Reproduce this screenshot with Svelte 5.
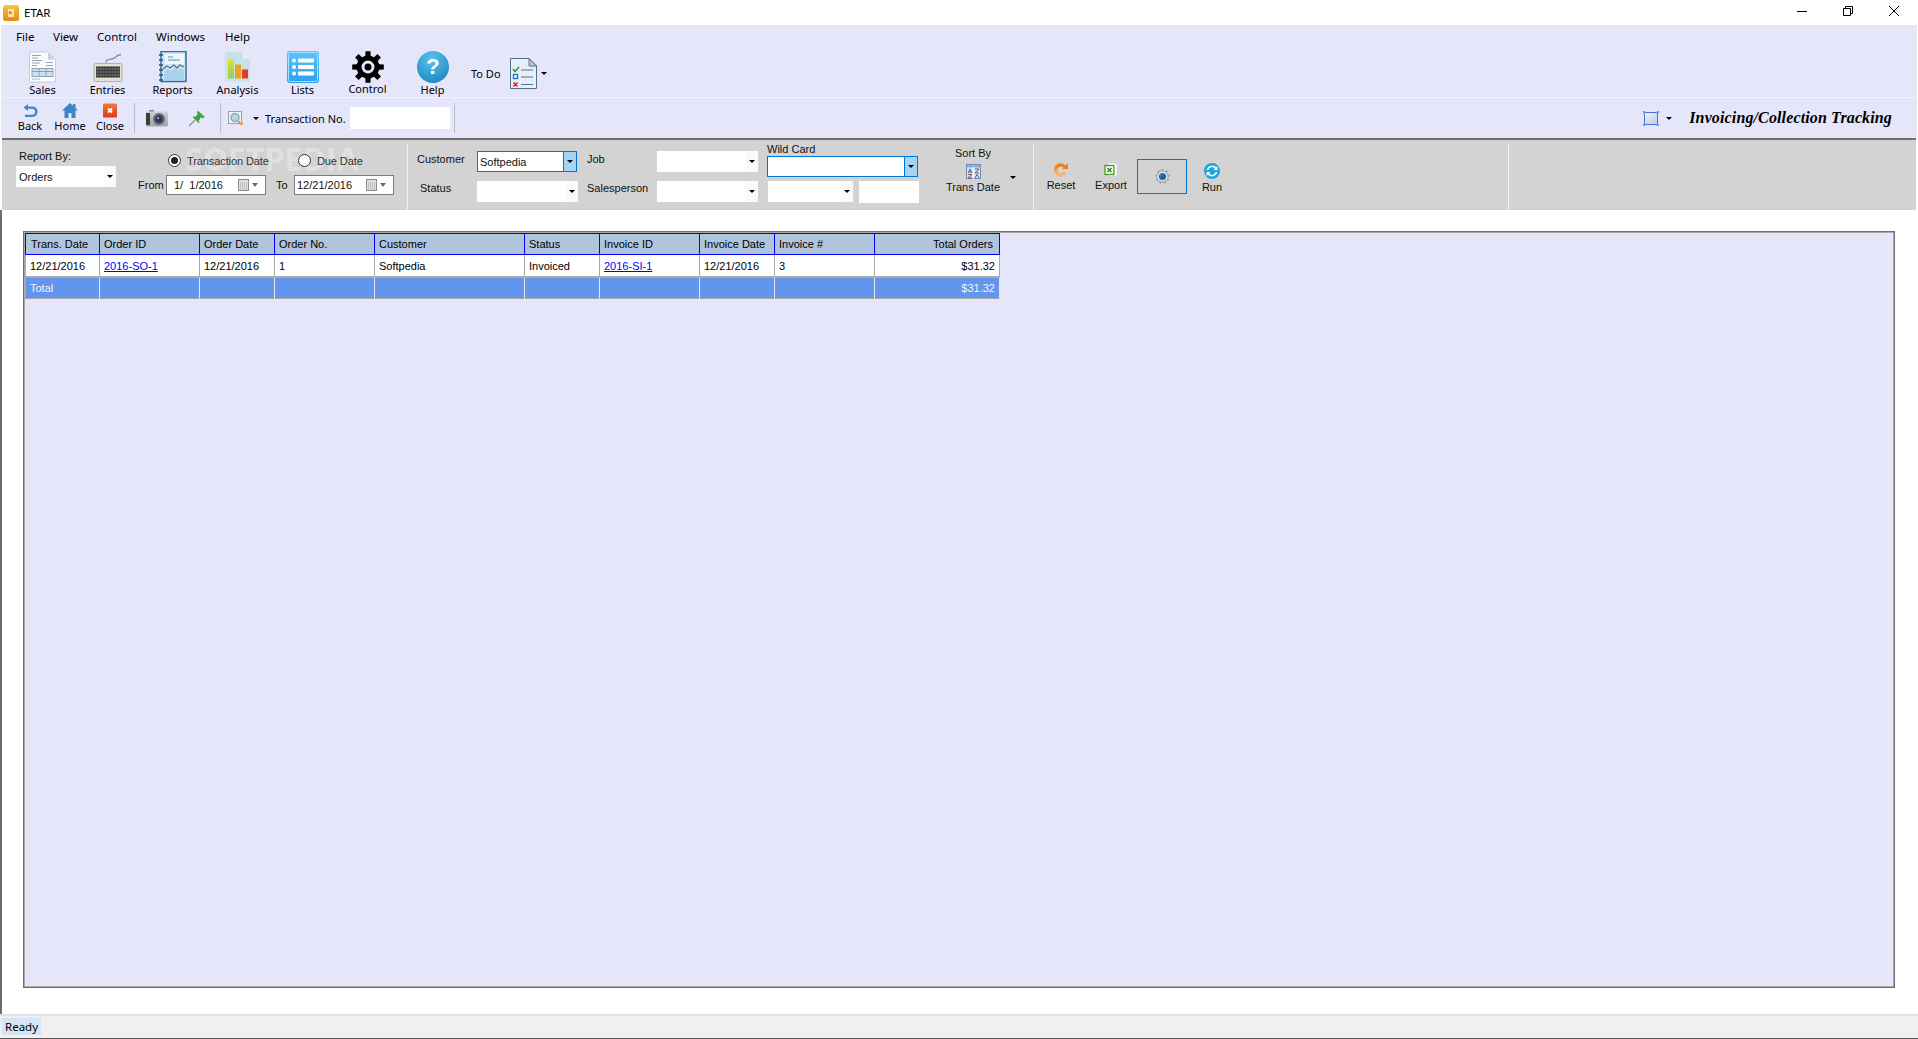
<script>
  const menus = ['File', 'View', 'Control', 'Windows', 'Help'];
  const columns = [
    { key: 'trans', label: 'Trans. Date', w: 75, cls: 'first' },
    { key: 'orderId', label: 'Order ID', w: 100, link: true },
    { key: 'orderDate', label: 'Order Date', w: 75 },
    { key: 'orderNo', label: 'Order No.', w: 100 },
    { key: 'customer', label: 'Customer', w: 150 },
    { key: 'status', label: 'Status', w: 75 },
    { key: 'invId', label: 'Invoice ID', w: 100, link: true },
    { key: 'invDate', label: 'Invoice Date', w: 75 },
    { key: 'invNo', label: 'Invoice #', w: 100 },
    { key: 'total', label: 'Total Orders', w: 125, cls: 'num' }
  ];
  const row = {
    trans: '12/21/2016', orderId: '2016-SO-1', orderDate: '12/21/2016', orderNo: '1',
    customer: 'Softpedia', status: 'Invoiced', invId: '2016-SI-1', invDate: '12/21/2016',
    invNo: '3', total: '$31.32'
  };
  function gear(cx, cy, outer, inner, teeth) {
    const pts = [];
    const step = (Math.PI * 2) / teeth;
    for (let i = 0; i < teeth; i++) {
      const a = i * step - Math.PI / 2;
      const w = step * 0.2;
      const g = step * 0.3;
      [[a - g, inner], [a - w, outer], [a + w, outer], [a + g, inner]].forEach(([t, r]) => {
        pts.push(`${(cx + Math.cos(t) * r).toFixed(2)},${(cy + Math.sin(t) * r).toFixed(2)}`);
      });
    }
    return pts.join(' ');
  }
</script>

<div class="app">
  <header class="titlebar">
    <svg class="appicon" width="16" height="16" viewBox="0 0 16 16">
      <defs><linearGradient id="ga" x1="0" y1="0" x2="0" y2="1"><stop offset="0" stop-color="#f8c44a"/><stop offset="1" stop-color="#e58a10"/></linearGradient></defs>
      <rect width="16" height="16" rx="2.5" fill="url(#ga)"/>
      <rect x="5" y="4" width="6" height="8" fill="#fbe3a8"/>
      <rect x="6" y="6.5" width="2.5" height="2.5" fill="#d97b10"/>
    </svg>
    <span class="apptitle">ETAR</span>
    <div class="winbtns">
      <svg width="12" height="12" viewBox="0 0 12 12"><path d="M1 6.5H11" stroke="#000" fill="none"/></svg>
      <svg width="12" height="12" viewBox="0 0 12 12"><path d="M1.5 3.5h7v7h-7zM3.5 3.5v-2h7v7h-2" stroke="#000" fill="none"/></svg>
      <svg width="12" height="12" viewBox="0 0 12 12"><path d="M1 1L11 11M11 1L1 11" stroke="#000" fill="none"/></svg>
    </div>
  </header>

  <nav class="menubar">
    {#each menus as m}<span class="menuitem">{m}</span>{/each}
  </nav>

  <div class="toolbar-main">
    <div class="tool">
      <svg width="27" height="31" viewBox="0 0 27 31">
        <path d="M.5 .5H19L26.5 8V30.5H.5Z" fill="#fbfcfd" stroke="#c6ccd4"/>
        <path d="M19 .5V8H26.5Z" fill="#c8d2dc"/>
        <path d="M3 4h9M3 6.500h6M3 9h10M3 11.500h8M3 14h5M17 11h7M17 14h7" stroke="#99a3ad" fill="none"/>
        <rect x="3" y="17" width="21" height="8" fill="#d3e0ec" stroke="#8aa3bb"/>
        <path d="M10 17v8M17 17v8M3 20h21" stroke="#8aa3bb" fill="none"/>
        <path d="M3 27.500h8" stroke="#a8b2bc"/>
      </svg>
      <span>Sales</span>
    </div>
    <div class="tool">
      <svg width="30" height="31" viewBox="0 0 30 31">
        <path d="M13 11C13 6 19 9 22 6S26 3 28 3" stroke="#8c8c8c" stroke-width="1.300" fill="none"/>
        <rect x="1" y="12" width="28" height="18" rx="1.500" fill="#e3dfd2" stroke="#b5b1a5"/>
        <rect x="3" y="15" width="24" height="11" fill="#3a3a3a"/>
        <path d="M3.500 17.500h23M3.500 20.500h23M3.500 23.500h23" stroke="#9c9c9c" stroke-dasharray="2 1" fill="none"/>
      </svg>
      <span>Entries</span>
    </div>
    <div class="tool">
      <svg width="29" height="32" viewBox="0 0 29 32">
        <rect x="3" y=".5" width="25" height="30" fill="#cfe5f5" stroke="#2f6fa8" stroke-width="1.500"/>
        <rect x="7" y="3" width="19" height="10" fill="#eef6fb"/>
        <path d="M10 6h5M10 9h12" stroke="#5b8cb3" fill="none"/>
        <path d="M5 18l4-3 3 2 4-3 3 3 3-3 4 2" stroke="#5a6f85" stroke-width="1.300" fill="none"/>
        <path d="M6 21l4-3 3 2 4-3 3 3 3-3 3 2V29H6Z" fill="#a9d2ec"/>
        <path d="M1 4h4M1 9h4M1 14h4M1 19h4M1 24h4M1 29h4" stroke="#30526e" stroke-width="1.500" fill="none"/>
      </svg>
      <span>Reports</span>
    </div>
    <div class="tool">
      <svg width="26" height="31" viewBox="0 0 26 31">
        <path d="M0 0H18L25 7V30H0Z" fill="#c6e3e6"/>
        <path d="M18 0V7H25Z" fill="#e6f2f3"/>
        <defs><linearGradient id="gy" x1="0" y1="0" x2="0" y2="1"><stop offset="0" stop-color="#e6de2a"/><stop offset="1" stop-color="#8fce62"/></linearGradient></defs>
        <rect x="3" y="8" width="6" height="19" fill="url(#gy)"/>
        <rect x="10" y="13" width="6" height="14" fill="#eba11c"/>
        <rect x="17" y="18" width="6" height="9" fill="#e4382c"/>
      </svg>
      <span>Analysis</span>
    </div>
    <div class="tool">
      <svg width="32" height="32" viewBox="0 0 32 32">
        <defs><linearGradient id="gl" x1="0" y1="0" x2="0" y2="1"><stop offset="0" stop-color="#5cc5fb"/><stop offset="1" stop-color="#2a9ff0"/></linearGradient></defs>
        <rect width="32" height="32" rx="3" fill="url(#gl)"/>
        <rect x="1.500" y="1.500" width="29" height="29" rx="2" fill="none" stroke="#a6e0fd"/>
        <g fill="#fff">
          <circle cx="7" cy="9.500" r="2"/><circle cx="7" cy="16" r="2"/><circle cx="7" cy="22.500" r="2"/>
          <rect x="11" y="7.500" width="16" height="4" rx="1"/><rect x="11" y="14" width="16" height="4" rx="1"/><rect x="11" y="20.500" width="16" height="4" rx="1"/>
        </g>
      </svg>
      <span>Lists</span>
    </div>
    <div class="tool control">
      <svg width="32" height="31" viewBox="0 0 32 32">
        <polygon points={gear(16, 16, 16, 11.500, 8)} fill="#000"/>
        <circle cx="16" cy="16" r="6.500" fill="#e6e6fa"/>
        <circle cx="16" cy="16" r="3.500" fill="#000"/>
      </svg>
      <span>Control</span>
    </div>
    <div class="tool">
      <svg width="32" height="32" viewBox="0 0 32 32">
        <defs><radialGradient id="gh" cx=".45" cy=".25" r=".9"><stop offset="0" stop-color="#5cc2ea"/><stop offset="1" stop-color="#1480bd"/></radialGradient></defs>
        <circle cx="16" cy="16" r="16" fill="url(#gh)"/>
        <text x="16" y="23" text-anchor="middle" class="qmark">?</text>
      </svg>
      <span>Help</span>
    </div>
    <span class="todo-label">To Do</span>
    <svg class="todo-icon" width="27" height="31" viewBox="0 0 27 31">
      <path d="M.5 .5H19L26.500 8V30.500H.5Z" fill="#e6eef6" stroke="#54708e"/>
      <path d="M19 .5V8H26.500Z" fill="#b9c9d9" stroke="#54708e"/>
      <path d="M3 11l2 2.500 4-4.500" stroke="#2b9a2b" stroke-width="1.500" fill="none"/>
      <rect x="3.500" y="16.500" width="4" height="4" fill="#fff" stroke="#1466d8" stroke-width="1.300"/>
      <path d="M3.500 24.500l4 4M7.500 24.500l-4 4" stroke="#e02020" stroke-width="1.500" fill="none"/>
      <path d="M11 12h12M11 19h12M11 26.500h12" stroke="#54708e" fill="none"/>
    </svg>
    <span class="caret todo-caret"></span>
  </div>

  <div class="toolbar-sub">
    <div class="mini">
      <svg width="16" height="15" viewBox="0 0 16 15">
        <path d="M6 1L1.500 4.500 6 8V5.800H10C12 5.800 13 7 13 8.800S12 11.800 10 11.800H3V14H10.500C13.500 14 15.500 12 15.500 8.800S13.500 3.500 10.500 3.500H6Z" fill="#3c88c8"/>
      </svg>
      <span>Back</span>
    </div>
    <div class="mini">
      <svg width="16" height="15" viewBox="0 0 16 15">
        <path d="M8 0L0 7.500H2.500V15H6.500V10H9.500V15H13.500V7.500H16L13.500 5V1H11V2.800Z" fill="#3a86c6"/>
      </svg>
      <span>Home</span>
    </div>
    <div class="mini">
      <svg width="14" height="14" viewBox="0 0 14 14">
        <defs><linearGradient id="gc" x1="0" y1="0" x2="0" y2="1"><stop offset="0" stop-color="#f27a3c"/><stop offset="1" stop-color="#e0361c"/></linearGradient></defs>
        <rect width="14" height="14" rx="1" fill="url(#gc)"/>
        <path d="M5 5l4 4M9 5l-4 4" stroke="#fff" stroke-width="1.800"/>
      </svg>
      <span>Close</span>
    </div>
    <i class="vsep first-sep"></i>
    <svg class="camera" width="22" height="17" viewBox="0 0 22 17">
      <rect x="3" y="0" width="5" height="2" fill="#8a8a8a"/>
      <defs><linearGradient id="gm" x1="0" y1="0" x2="0" y2="1"><stop offset="0" stop-color="#d2d2d6"/><stop offset="1" stop-color="#a2a2a6"/></linearGradient></defs>
      <rect x="0" y="1.500" width="22" height="15" rx="1.500" fill="url(#gm)"/>
      <rect x="0" y="3" width="4" height="12" fill="#3d3d40"/>
      <circle cx="13" cy="9" r="6" fill="#6a6b72"/>
      <circle cx="13" cy="9" r="3.800" fill="#2b3a5c"/>
      <circle cx="12" cy="8" r="1.100" fill="#a8bde0"/>
    </svg>
    <svg class="pin" width="16" height="15" viewBox="0 0 16 15">
      <path d="M0 15L6 9" stroke="#8c8c70" stroke-width="1.200"/>
      <path d="M9 0L15.500 6 13.500 6.800 11.500 6 9.500 10 10 12 4 6 6 6 9 4 8.500 2Z" fill="#39a83a" stroke="#2b8d2e" stroke-width=".5"/>
    </svg>
    <i class="vsep second-sep"></i>
    <svg class="lens" width="16" height="15" viewBox="0 0 16 15">
      <rect x=".5" y=".5" width="13" height="12" fill="#eef1f6" stroke="#555" stroke-dasharray="1 1"/>
      <circle cx="7" cy="6.500" r="4" fill="#b6d3ea" stroke="#7c9ab4" stroke-width="1.200"/>
      <path d="M10 10l3 3" stroke="#a08c50" stroke-width="1.500"/>
      <circle cx="13.500" cy="12.500" r="1.800" fill="#eda53a"/>
    </svg>
    <span class="caret lens-caret"></span>
    <label class="trans-label" for="tn">Transaction No.</label>
    <input id="tn" class="trans-input" />
    <i class="vsep third-sep"></i>
    <div class="spacer"></div>
    <svg width="16" height="15" viewBox="0 0 16 15">
      <defs><linearGradient id="gs" x1="0" y1="0" x2="1" y2="1"><stop offset="0" stop-color="#f0f4fb"/><stop offset="1" stop-color="#b8cde6"/></linearGradient></defs>
      <rect x="1.500" y="1.500" width="13" height="12" fill="url(#gs)" stroke="#4c6fd8"/>
      <g fill="#7e98e8"><rect x="0" y="0" width="2.500" height="2.500"/><rect x="13.500" y="0" width="2.500" height="2.500"/><rect x="0" y="12.500" width="2.500" height="2.500"/><rect x="13.500" y="12.500" width="2.500" height="2.500"/></g>
    </svg>
    <span class="caret view-caret"></span>
    <span class="screen-title">Invoicing/Collection Tracking</span>
  </div>

  <section class="filters">
    <span class="watermark">SOFTPEDIA</span>
    <div class="group g-report">
      <div class="report-col">
        <span class="lbl">Report By:</span>
        <div class="combo flat"><span>Orders</span><i class="drop"><span class="caret"></span></i></div>
      </div>
      <div class="date-col">
        <div class="radios">
          <span class="radio on"></span><span class="lbl soft radio-t1">Transaction Date</span>
          <span class="radio"></span><span class="lbl soft">Due Date</span>
        </div>
        <div class="dates">
          <span class="lbl from">From</span>
          <div class="date"><span class="d1">1/ &nbsp;1/2016</span><svg class="cal" width="12" height="12" viewBox="0 0 12 12"><rect x=".5" y=".5" width="10" height="11" fill="#e2e2e2" stroke="#8c8c8c"/><path d="M2 4h7M2 6h7M2 8h7M2 10h7" stroke="#9a9a9a" stroke-dasharray="1 1"/></svg><span class="calcaret"></span></div>
          <span class="lbl to">To</span>
          <div class="date"><span class="d2">12/21/2016</span><svg class="cal" width="12" height="12" viewBox="0 0 12 12"><rect x=".5" y=".5" width="10" height="11" fill="#e2e2e2" stroke="#8c8c8c"/><path d="M2 4h7M2 6h7M2 8h7M2 10h7" stroke="#9a9a9a" stroke-dasharray="1 1"/></svg><span class="calcaret"></span></div>
        </div>
      </div>
    </div>
    <i class="psep"></i>
    <div class="group g-fields">
      <div class="fields">
        <span class="lbl l1">Customer</span>
        <div class="combo focus"><span>Softpedia</span><i class="drop"><span class="caret"></span></i></div>
        <span class="lbl l2">Job</span>
        <div class="combo flat"><i class="drop"><span class="caret"></span></i></div>
        <span class="lbl l1 l1b">Status</span>
        <div class="combo flat"><i class="drop"><span class="caret"></span></i></div>
        <span class="lbl l2 l2b">Salesperson</span>
        <div class="combo flat"><i class="drop"><span class="caret"></span></i></div>
      </div>
      <div class="wild">
        <span class="lbl wild-lbl">Wild Card</span>
        <div class="combo focus"><i class="drop"><span class="caret"></span></i></div>
        <div class="wild-row">
          <div class="combo flat"><i class="drop"><span class="caret"></span></i></div>
          <input class="plain" />
        </div>
      </div>
      <div class="sort">
        <div class="sort-col">
          <span class="lbl">Sort By</span>
          <svg width="15" height="15" viewBox="0 0 15 15">
            <rect x=".5" y=".5" width="14" height="14" fill="#d3e3f3" stroke="#6c93c0"/>
            <rect x="1" y="1" width="13" height="2.500" fill="#8ab2dc"/>
            <path d="M7.500 3v12" stroke="#fff"/>
            <path d="M2 9l2-4 2 4M3 8h2" stroke="#2f6bb5" fill="none"/>
            <path d="M9 5h4l-4 4h4" stroke="#c0392b" fill="none"/>
            <path d="M2 10.500h4l-4 3.500h4" stroke="#c0392b" fill="none"/>
            <path d="M9 14l2-3.500 2 3.500" stroke="#2f6bb5" fill="none"/>
          </svg>
          <span class="lbl sort-val">Trans Date</span>
        </div>
        <span class="caret sort-caret"></span>
      </div>
    </div>
    <i class="psep"></i>
    <div class="group g-actions">
      <div class="action">
        <svg width="14" height="14" viewBox="0 0 14 14">
          <defs><linearGradient id="gr" x1="0" y1="0" x2="0" y2="1"><stop offset="0" stop-color="#f47c10"/><stop offset="1" stop-color="#f9b870"/></linearGradient></defs>
          <path d="M10.500 3.800A5 5 0 1 0 11 9.500" stroke="url(#gr)" stroke-width="3.500" fill="none"/>
          <path d="M8 6H14V0Z" fill="#f47c10"/>
        </svg>
        <span>Reset</span>
      </div>
      <div class="action">
        <svg width="14" height="14" viewBox="0 0 14 14">
          <path d="M4 0H11L13 2V13H4Z" fill="#fff" stroke="#d4d4d4" stroke-width=".8"/>
          <rect x="1" y="2.500" width="9" height="9" fill="#f4f8ee" stroke="#4f9a18" stroke-width="1.300"/>
          <path d="M3.500 5l4 4M7.500 5l-4 4" stroke="#1f8038" stroke-width="1.400"/>
        </svg>
        <span>Export</span>
      </div>
      <div class="action boxed">
        <svg width="15" height="15" viewBox="0 0 16 16">
          <polygon points={gear(8, 8, 8, 6.500, 9)} fill="#a8a8ac"/>
          <circle cx="8" cy="8" r="5.400" fill="#e6e8ec"/>
          <circle cx="8" cy="8" r="3.800" fill="#1762b0"/>
          <path d="M5.500 9A3 3 0 0 1 9.500 5.500A4 4 0 0 0 5.500 9Z" fill="#9fd0f2"/>
        </svg>
      </div>
      <div class="action">
        <svg width="16" height="16" viewBox="0 0 16 16">
          <circle cx="8" cy="8" r="8" fill="#1ca5df"/>
          <path d="M3.500 7A4.700 4.700 0 0 1 12 5.500" stroke="#fff" stroke-width="1.500" fill="none"/>
          <path d="M12.500 9A4.700 4.700 0 0 1 4 10.500" stroke="#fff" stroke-width="1.500" fill="none"/>
          <path d="M13.500 3v4h-4ZM2.500 13V9h4Z" fill="#fff"/>
        </svg>
        <span>Run</span>
      </div>
    </div>
    <i class="psep far"></i>
  </section>

  <main class="content">
    <div class="gridbox">
      <table>
        <colgroup>{#each columns as c}<col class="c{c.w}" />{/each}</colgroup>
        <thead>
          <tr>{#each columns as c}<th class={c.cls}>{c.label}</th>{/each}</tr>
        </thead>
        <tbody>
          <tr>
            {#each columns as c}
              <td class={c.cls === 'num' ? 'num' : ''}>
                {#if c.link}<a href="#top">{row[c.key]}</a>{:else}{row[c.key]}{/if}
              </td>
            {/each}
          </tr>
          <tr class="total">
            {#each columns as c, i}
              <td class={c.cls === 'num' ? 'num' : ''}>{i === 0 ? 'Total' : c.cls === 'num' ? '$31.32' : ''}</td>
            {/each}
          </tr>
        </tbody>
      </table>
    </div>
  </main>

  <footer class="statusbar"><span class="ready">Ready</span></footer>
</div>

<style>
  :global(body) { margin: 0; overflow: hidden; background: #fff; }

  .app {
    width: 1918px; height: 1039px; display: flex; flex-direction: column; background: #fff;
    font-family: "Liberation Sans", Arial, sans-serif; font-size: 11px; color: #000;
    overflow: hidden;
  }

  .titlebar { height: 25px; flex: none; display: flex; align-items: center; padding-left: 3px; font-family: "Noto Sans", sans-serif; font-size: 11.500px; }
  .appicon { margin-right: 5px; }
  .winbtns { margin-left: auto; display: flex; gap: 34px; padding-right: 18px; padding-bottom: 3px; }

  .menubar {
    height: 23px; flex: none; display: grid; grid-template-columns: 37px 44px 59px 69px auto; align-items: center;
    padding-left: 15px; margin: 0 1px; background: #e6e6fa;
    font-family: "Noto Sans", sans-serif; font-size: 11.500px;
  }

  .toolbar-main {
    height: 50px; flex: none; display: flex; align-items: flex-start; padding-left: 9px; margin: 0 1px; background: #e6e6fa;
    font-family: "Noto Sans", sans-serif; font-size: 11px; box-sizing: border-box; border-bottom: 1px solid #f3f3fc;
  }
  .tool { width: 65px; height: 49px; display: flex; flex-direction: column; align-items: center; justify-content: flex-start; padding-top: 3px; box-sizing: border-box; }
  .tool svg { height: 32px; flex: none; }
  .tool span { line-height: 14px; margin-top: 0; }
  .tool.control span { margin-top: -1px; }
  .qmark { font: bold 22px "Liberation Sans", sans-serif; fill: #fff; }
  .todo-label { margin-left: 6px; margin-top: 19px; line-height: 14px; }
  .todo-icon { margin-left: 9px; margin-top: 10px; }
  .caret { display: inline-block; width: 0; height: 0; border-left: 3px solid transparent; border-right: 3px solid transparent; border-top: 3px solid #000; flex: none; }
  .todo-caret { margin-left: 4px; margin-top: 24px; }

  .toolbar-sub {
    height: 40px; flex: none; display: flex; align-items: center; padding-left: 9px; margin: 0 1px; background: #e6e6fa;
    font-family: "Noto Sans", sans-serif; font-size: 11px; box-sizing: border-box;
  }
  .mini { width: 40px; height: 40px; display: flex; flex-direction: column; align-items: center; padding-top: 5px; box-sizing: border-box; }
  .mini svg { height: 15px; flex: none; }
  .mini span { line-height: 14px; margin-top: 1px; }
  .vsep { display: block; width: 1px; height: 30px; background: #bcbcc8; flex: none; }
  .first-sep { margin-left: 4px; }
  .camera { margin-left: 11px; }
  .pin { margin-left: 21px; }
  .second-sep { margin-left: 15px; }
  .lens { margin-left: 7px; }
  .lens-caret { margin-left: 9px; }
  .trans-label { margin-left: 6px; }
  .trans-input { width: 100px; height: 22px; border: 0; padding: 0; margin: 0 0 0 4px; background: #fff; box-sizing: border-box; }
  .third-sep { margin-left: 4px; }
  .spacer { flex: 1; }
  .view-caret { margin-left: 7px; }
  .screen-title { margin-left: 17px; margin-right: 25px; font: italic bold 16px "Liberation Serif", serif; letter-spacing: .13px; }

  .filters {
    position: relative; height: 72px; flex: none; display: flex; box-sizing: border-box;
    border-top: 2px solid #6e6e6e; background: #d3d3d3; margin-left: 2px; margin-right: 2px;
    padding-left: 2px; color: #111;
  }
  .watermark {
    position: absolute; left: 183px; top: 2px; font: bold 32px "Open Sans", sans-serif;
    color: #fff; opacity: .3; line-height: 34px; pointer-events: none;
  }
  .group { display: flex; flex: none; box-sizing: border-box; position: relative; }
  .lbl { line-height: 14px; white-space: nowrap; }
  .soft { color: #333; letter-spacing: -.1px; }
  .psep { display: block; width: 1px; background: #efefef; height: 66px; margin-top: 4px; flex: none; }
  .psep.far { margin-left: 271px; }

  .g-report { width: 403px; }
  .report-col { width: 150px; padding-left: 12px; box-sizing: border-box; display: flex; flex-direction: column; }
  .report-col .lbl { margin-top: 9px; margin-bottom: 3px; margin-left: 3px; }
  .report-col .combo { width: 100px; }
  .date-col { display: flex; flex-direction: column; margin-left: -16px; }
  .radios { display: flex; align-items: center; margin-top: 14px; height: 13px; margin-left: 30px; }
  .radio { width: 13px; height: 13px; border-radius: 50%; box-sizing: border-box; border: 1px solid #333; background: #fff; position: relative; flex: none; margin-right: 6px; }
  .radio.on::after { content: ""; position: absolute; left: 2px; top: 2px; width: 7px; height: 7px; border-radius: 50%; background: #222; }
  .radio-t1 { width: 111px; }
  .dates { display: flex; align-items: center; margin-top: 8px; }
  .from { width: 28px; }
  .to { width: 18px; margin-left: 10px; }
  .date {
    width: 100px; height: 20px; box-sizing: border-box; border: 1px solid #7a7a7a; background: #fff; display: flex; align-items: center;
  }
  .d1 { margin-left: 7px; width: 64px; }
  .d2 { margin-left: 2px; width: 69px; }
  .cal { flex: none; }
  .calcaret { width: 0; height: 0; border-left: 3.500px solid transparent; border-right: 3.500px solid transparent; border-top: 4px solid #5a6e8c; margin-left: 2px; }

  .combo { position: relative; height: 21px; box-sizing: border-box; background: #fff; display: flex; align-items: center; padding-left: 3px; }
  .combo.focus { border: 1px solid #0078d7; padding-left: 2px; }
  .drop { position: absolute; right: 0; top: 0; bottom: 0; width: 12px; background: #fafafa; display: flex; align-items: center; justify-content: center; }
  .focus .drop { background: #a6d2f4; border-left: 1px solid #0078d7; }

  .g-fields { width: 625px; }
  .fields { display: grid; grid-template-columns: 69px 101px 79px 101px; grid-template-rows: 21px 21px; row-gap: 9px; padding-top: 11px; align-items: start; }
  .fields .focus { width: 100px; }
  .l1, .l2 { margin-top: 1px; }
  .l1 { padding-left: 9px; }
  .l1b { padding-left: 12px; margin-top: 0; }
  .l2 { padding-left: 9px; }
  .l2b { margin-top: 0; }
  .wild { width: 152px; margin-left: 9px; display: flex; flex-direction: column; }
  .wild .focus { width: 151px; }
  .wild-lbl { height: 16px; line-height: 18px; }
  .wild-row { display: flex; margin-top: 4px; margin-left: 1px; gap: 6px; }
  .wild-row .combo { width: 85px; height: 21px; }
  .plain { width: 60px; height: 22px; border: 0; padding: 0; margin: 0; background: #fff; box-sizing: border-box; }
  .sort { display: flex; margin-left: 27px; }
  .sort-col { width: 54px; display: flex; flex-direction: column; align-items: center; padding-top: 6px; box-sizing: border-box; }
  .sort-col svg { margin-top: 4px; }
  .sort-val { margin-top: 1px; }
  .sort-caret { margin-left: 10px; margin-top: 36px; }

  .g-actions { display: flex; padding-left: 2px; }
  .action { width: 50px; display: flex; flex-direction: column; align-items: center; padding-top: 23px; box-sizing: border-box; }
  .action svg { flex: none; }
  .action span { line-height: 14px; margin-top: 1px; }
  .action.boxed { width: 50px; height: 35px; margin: 19px 0 0 1px; padding-top: 0; justify-content: center; border: 1px solid #0078d7; }

  .content { flex: 1; min-height: 0; border-left: 2px solid #6e6e6e; padding: 21px 0 26px 21px; margin-right: 23px; display: flex; }
  .gridbox { flex: 1; background: #e6e6fa; border: 1px solid #6e6e6e; box-shadow: inset 0 0 0 1px #a9a9a9; padding: 1px; }

  table { border-collapse: separate; border-spacing: 0; table-layout: fixed; width: 875px; }
  .c75 { width: 75px; } .c100 { width: 100px; } .c150 { width: 150px; } .c125 { width: 125px; }
  th, td { height: 22px; padding: 0 4px; box-sizing: border-box; font-weight: normal; text-align: left; white-space: nowrap; overflow: hidden; }
  th { background: #b0c4de; border-top: 1px solid #00f; border-bottom: 1px solid #00f; border-right: 1px solid #00f; }
  th:first-child { border-left: 1px solid #00f; }
  th.first { padding-left: 5px; }
  tbody td { background: #fff; border-right: 1px solid #a9a9a9; border-bottom: 1px solid #a9a9a9; }
  tbody td:first-child { border-left: 1px solid #a9a9a9; }
  .num { text-align: right; }
  th.num { padding-right: 6px; }
  a { color: #00f; text-decoration: underline; }
  tbody tr.total td { background: #6495ed; color: #f0f4ff; border-right-color: #e6e6e6; border-top: 1px solid #a9a9a9; height: 22px; }
  tbody tr.total td:first-child { border-left-color: #a9a9a9; }

  .statusbar { height: 25px; flex: none; box-sizing: border-box; border-top: 2px solid #e2e2e2; border-bottom: 1px solid #555; background: #f0f0f0; padding: 2px 0 3px 2px; display: flex; }
  .ready { width: 39px; background: #d4e5f5; display: flex; align-items: center; padding-left: 3px; box-sizing: border-box; font-family: "Noto Sans", sans-serif; font-size: 11.500px; }
</style>
